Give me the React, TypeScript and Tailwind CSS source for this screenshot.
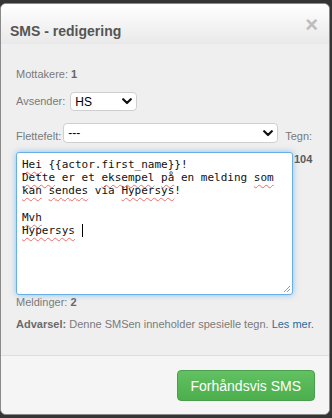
import type { ReactNode } from 'react';

function Squiggle({ children }: { children: ReactNode }) {
  return (
    <span className="underline decoration-wavy decoration-[#ef6b6b] decoration-[1px] underline-offset-[3px]">
      {children}
    </span>
  );
}

function Chevron() {
  return (
    <svg width="10" height="7" viewBox="0 0 10 7" className="shrink-0">
      <path d="M1.2 1.2 L5 5 L8.8 1.2" fill="none" stroke="#111" strokeWidth="2.2" strokeLinecap="round" strokeLinejoin="round" />
    </svg>
  );
}

function FakeSelect({ value, className }: { value: string; className: string }) {
  return (
    <div
      className={`flex items-center justify-between bg-white border border-[#cfcfcf] rounded-[4px] pl-[4px] pr-[4px] text-[12px] text-black ${className}`}
    >
      <span>{value}</span>
      <Chevron />
    </div>
  );
}

export default function App() {
  return (
    <div className="w-[332px] h-[418px] bg-[#353535] pt-[3px] pr-[2px] pb-[3px] font-['Liberation_Sans',Arial,sans-serif]">
      <div className="h-full flex flex-col border border-[#8a8a8a] rounded-[6px] overflow-hidden bg-[#efefef]">
        {/* Header */}
        <div className="h-[40px] shrink-0 flex items-end justify-between pl-[9px] pr-[11px] pb-[4px] bg-gradient-to-b from-[#ffffff] to-[#e9e9e9]">
          <h3 className="text-[14px] font-bold text-[#555] leading-[18px]">SMS - redigering</h3>
          <span className="self-start mt-[11px] text-[22px] leading-[20px] font-bold text-[#bdbdbd]">×</span>
        </div>

        {/* Body */}
        <div className="flex-1 pl-[15px] pt-[23px] text-[11px] text-[#7a7a7a]">
          <p className="leading-[15px]">
            Mottakere: <b className="text-[#666]">1</b>
          </p>

          <div className="flex items-center mt-[10px] h-[19px]">
            <span className="leading-[15px]">Avsender:</span>
            <FakeSelect value="HS" className="ml-[5px] w-[67px] h-[19px]" />
          </div>

          <div className="flex items-end mt-[12px] h-[20px]">
            <span className="leading-[15px] mb-[-1px]">Flettefelt:</span>
            <FakeSelect value="---" className="ml-[2px] w-[215px] h-[20px]" />
            <span className="ml-[7px] leading-[15px] mb-[-1px]">Tegn:</span>
          </div>

          <div className="flex items-start mt-[9px]">
            <div className="relative w-[277px] h-[143px] bg-white border border-[#66afe9] rounded-[3px] shadow-[0_0_6px_rgba(102,175,233,0.7)] px-[5px] pt-[5px] font-['DejaVu_Sans_Mono',monospace] text-[11px] leading-[13.2px] text-[#111] whitespace-pre">
              <div>
                <Squiggle>Hei</Squiggle> {'{{actor.first_name}}!'}
              </div>
              <div>
                <Squiggle>Dette</Squiggle> er et <Squiggle>eksempel</Squiggle> <Squiggle>på</Squiggle> en melding <Squiggle>som</Squiggle>
              </div>
              <div>
                <Squiggle>kan</Squiggle> <Squiggle>sendes</Squiggle> via <Squiggle>Hypersys</Squiggle>!
              </div>
              <div>&nbsp;</div>
              <div>
                <Squiggle>Mvh</Squiggle>
              </div>
              <div className="flex items-center">
                <Squiggle>Hypersys</Squiggle>
                <span> </span>
                <span className="inline-block w-px h-[13px] bg-black" />
              </div>
              <svg width="8" height="8" viewBox="0 0 8 8" className="absolute right-[1px] bottom-[1px]">
                <path d="M7 1 L1 7 M7 4 L4 7" stroke="#9a9a9a" strokeWidth="1" />
              </svg>
            </div>
            <span className="ml-[1px] leading-[14px] font-bold text-[#5a5a5a]">104</span>
          </div>

          <p className="leading-[14px] mt-[0px]">
            Meldinger: <b className="text-[#666]">2</b>
          </p>

          <p className="leading-[15px] mt-[8px]">
            <b className="text-[#6a6a6a]">Advarsel:</b> Denne SMSen inneholder spesielle tegn.{' '}
            <a className="text-[#2d6a9a]">Les mer.</a>
          </p>
        </div>

        {/* Footer */}
        <div className="h-[59px] shrink-0 border-t border-[#dedede] bg-[#f5f5f5] flex items-start justify-end pt-[14px] pr-[14px]">
          <button className="h-[31px] px-[13px] rounded-[4px] border border-[#4a9d4a] bg-gradient-to-b from-[#62c162] to-[#4cae4c] text-white text-[14px] leading-[16px]">
            Forhåndsvis SMS
          </button>
        </div>
      </div>
    </div>
  );
}
